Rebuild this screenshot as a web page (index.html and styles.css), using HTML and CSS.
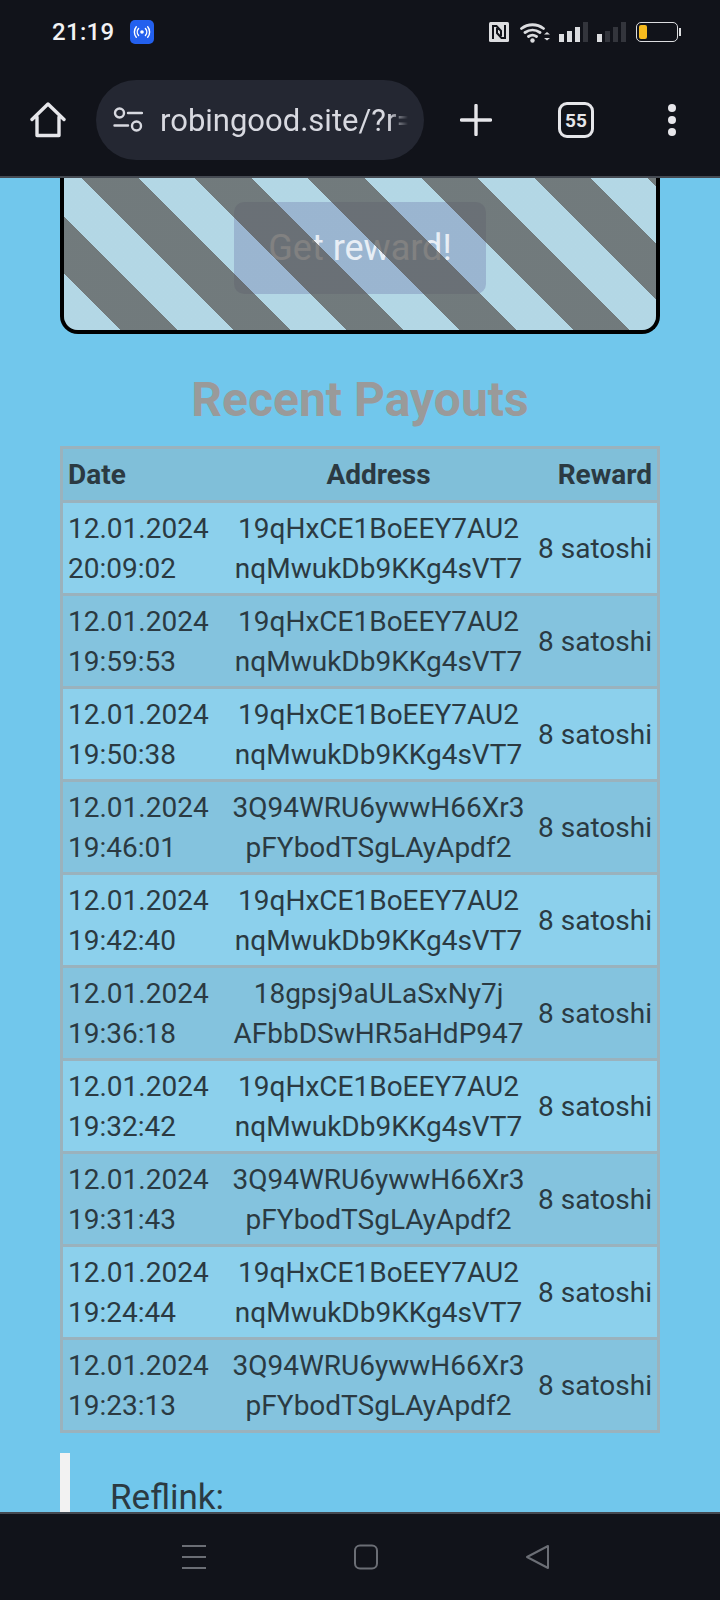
FILE: index.html
```html
<!DOCTYPE html>
<html lang="en">
<head>
  <meta charset="UTF-8" />
  <meta name="viewport" content="width=device-width, initial-scale=1.0"/>
  <title>Recent Payouts</title>
  <link rel="stylesheet" href="styles.css">
</head>
<body>
  <header class="top">
    <div class="status">
      <span class="time">21:19</span>
      <span class="hotspot">
        <svg width="24" height="24" viewBox="0 0 24 24" fill="none" stroke="#fff" stroke-width="1.4" stroke-linecap="round">
          <circle cx="12" cy="12" r="1.8" fill="#fff" stroke="none"/>
          <path d="M8.6 8.6a5 5 0 0 0 0 6.8M15.4 8.6a5 5 0 0 1 0 6.8M6.3 6.8a8 8 0 0 0 0 10.4M17.7 6.8a8 8 0 0 1 0 10.4"/>
        </svg>
      </span>
      <span class="status-right">
        <svg class="nfc" width="20" height="20" viewBox="0 0 20 20">
          <rect width="20" height="20" rx="1.500" fill="#dcdde0"/>
          <path fill="none" stroke="#11131a" stroke-width="2" d="M4 17V4h3.500l4.500 5v5M16 3v13h-3.500L8 11V6"/>
        </svg>
        <svg class="wifi" width="30" height="22" viewBox="0 0 30 22" fill="none" stroke="#dcdde0" stroke-width="2.800" stroke-linecap="round">
          <path d="M1.500 7.500a18 18 0 0 1 22 0M5 11.500a13 13 0 0 1 15 0M8.500 15.500a7 7 0 0 1 8 0"/>
          <circle cx="12.500" cy="19.500" r="2.200" fill="#dcdde0" stroke="none"/>
          <path d="M24 13.500l3-2.500 3 2.500zM24 17l3 2.500 3-2.500z" fill="#dcdde0" stroke="none"/>
        </svg>
        <span class="bars">
          <i class="b1"></i><i class="b2"></i><i class="b3"></i><i class="b4 off"></i>
        </span>
        <span class="bars">
          <i class="b1"></i><i class="b2 off"></i><i class="b3 off"></i><i class="b4 off"></i>
        </span>
        <span class="battery"><span class="level"></span></span>
      </span>
    </div>
    <div class="toolbar">
      <svg class="home" width="36" height="36" viewBox="0 0 36 36" fill="none" stroke="#e6e6ea" stroke-width="3.400" stroke-linejoin="round" stroke-linecap="round">
        <path d="M2 17.500L18 2l16 15.500M7 15v18.500h22V15"/>
      </svg>
      <div class="urlbar">
        <svg class="tune" width="30" height="28" viewBox="0 0 30 28" fill="none" stroke="#d8d9e0" stroke-width="2.400" stroke-linecap="round">
          <circle cx="6.500" cy="7" r="4.500"/>
          <path d="M15 7h14M1.500 19.500H15"/>
          <circle cx="23.500" cy="20" r="4.500"/>
        </svg>
        <span class="url">robingood.site/?r=19qHxCE1</span>
      </div>
      <svg class="plus" width="32" height="32" viewBox="0 0 32 32" stroke="#e6e6ea" stroke-width="3.400" stroke-linecap="round">
        <path d="M16 1.500v29M1.500 16h29"/>
      </svg>
      <span class="tabs">55</span>
      <span class="dots"><i></i><i></i><i></i></span>
    </div>
  </header>

  <main class="page">
    <div class="claim">
      <button class="reward-btn">Get reward!</button>
      <div class="stripes"></div>
    </div>

    <h2 class="payouts-title">Recent Payouts</h2>

    <table class="payouts">
      <thead>
        <tr><th class="c-date">Date</th><th class="c-addr">Address</th><th class="c-reward">Reward</th></tr>
      </thead>
      <tbody>
        <tr><td>12.01.2024<br>20:09:02</td><td class="c-addr">19qHxCE1BoEEY7AU2<br>nqMwukDb9KKg4sVT7</td><td class="c-reward">8 satoshi</td></tr>
        <tr><td>12.01.2024<br>19:59:53</td><td class="c-addr">19qHxCE1BoEEY7AU2<br>nqMwukDb9KKg4sVT7</td><td class="c-reward">8 satoshi</td></tr>
        <tr><td>12.01.2024<br>19:50:38</td><td class="c-addr">19qHxCE1BoEEY7AU2<br>nqMwukDb9KKg4sVT7</td><td class="c-reward">8 satoshi</td></tr>
        <tr><td>12.01.2024<br>19:46:01</td><td class="c-addr">3Q94WRU6ywwH66Xr3<br>pFYbodTSgLAyApdf2</td><td class="c-reward">8 satoshi</td></tr>
        <tr><td>12.01.2024<br>19:42:40</td><td class="c-addr">19qHxCE1BoEEY7AU2<br>nqMwukDb9KKg4sVT7</td><td class="c-reward">8 satoshi</td></tr>
        <tr><td>12.01.2024<br>19:36:18</td><td class="c-addr">18gpsj9aULaSxNy7j<br>AFbbDSwHR5aHdP947</td><td class="c-reward">8 satoshi</td></tr>
        <tr><td>12.01.2024<br>19:32:42</td><td class="c-addr">19qHxCE1BoEEY7AU2<br>nqMwukDb9KKg4sVT7</td><td class="c-reward">8 satoshi</td></tr>
        <tr><td>12.01.2024<br>19:31:43</td><td class="c-addr">3Q94WRU6ywwH66Xr3<br>pFYbodTSgLAyApdf2</td><td class="c-reward">8 satoshi</td></tr>
        <tr><td>12.01.2024<br>19:24:44</td><td class="c-addr">19qHxCE1BoEEY7AU2<br>nqMwukDb9KKg4sVT7</td><td class="c-reward">8 satoshi</td></tr>
        <tr><td>12.01.2024<br>19:23:13</td><td class="c-addr">3Q94WRU6ywwH66Xr3<br>pFYbodTSgLAyApdf2</td><td class="c-reward">8 satoshi</td></tr>
      </tbody>
    </table>

    <blockquote class="reflink">Reflink:</blockquote>
  </main>

  <footer class="navbar">
    <svg width="26" height="26" viewBox="0 0 26 26" stroke="#6b6e75" stroke-width="2">
      <path d="M1 2h24M1 13h24M1 24h24"/>
    </svg>
    <svg width="26" height="26" viewBox="0 0 26 26" fill="none" stroke="#6b6e75" stroke-width="2">
      <rect x="2" y="1.500" width="22" height="23" rx="5"/>
    </svg>
    <svg width="26" height="26" viewBox="0 0 26 26" fill="none" stroke="#6b6e75" stroke-width="2" stroke-linejoin="round">
      <path d="M23 2v22L2 13z"/>
    </svg>
  </footer>
</body>
</html>
```

FILE: styles.css
```css
* { box-sizing: border-box; }
html, body { height: 100%; }
body {
  margin: 0;
  height: 1600px;
  overflow: hidden;
  display: flex; flex-direction: column;
  font-family: Roboto, "Noto Sans", sans-serif;
  background-color: #71c7ec;
  color: #2b3a42;
}

/* phone status bar + browser toolbar */
.top {
  height: 178px; flex: none;
  background-color: #11131a;
  border-bottom: 2px solid #454a52;
}
.status {
  height: 64px;
  display: flex; align-items: center;
  padding: 0 42px 0 52px;
}
.time { font-size: 24px; font-weight: 500; color: #f2f2f4; letter-spacing: 0.3px; }
.hotspot {
  width: 24px; height: 24px; margin-left: 16px;
  background-color: #2360ee; border-radius: 5px;
  display: flex;
}
.status-right { margin-left: auto; display: flex; align-items: center; }
.wifi { margin-left: 11px; }
.bars { display: flex; align-items: flex-end; gap: 3px; height: 20px; margin-left: 9px; }
.bars i { width: 5px; background-color: #dcdde0; }
.bars i.off { background-color: #33353c; }
.bars .b1 { height: 8px; }
.bars .b2 { height: 11px; }
.bars .b3 { height: 15px; }
.bars .b4 { height: 20px; }
.battery {
  position: relative;
  width: 42px; height: 20px; margin-left: 10px; padding: 2px;
  border: 1.500px solid #dcdde0; border-radius: 5px;
}
.battery::after {
  content: "";
  position: absolute; right: -4px; top: 5px;
  width: 2px; height: 8px;
  background-color: #dcdde0;
}
.level { display: block; width: 8px; height: 100%; background-color: #f7bb1e; border-radius: 2px; }

.toolbar {
  height: 112px;
  display: flex; align-items: flex-start;
  padding: 16px 0 0 30px;
}
.home { margin-top: 22px; flex: none; }
.urlbar {
  width: 328px; height: 80px; margin-left: 30px; padding-left: 17px;
  background-color: #242732; border-radius: 40px;
  display: flex; align-items: center;
  flex: none;
}
.tune { flex: none; }
.url {
  width: 248px; margin-left: 17px;
  overflow: hidden; white-space: nowrap;
  font-size: 31px; color: #d8d9e0;
  -webkit-mask-image: linear-gradient(to right, #000 92%, transparent);
  mask-image: linear-gradient(to right, #000 92%, transparent);
}
.plus { margin: 24px 0 0 36px; flex: none; }
.tabs {
  width: 36px; height: 36px; margin: 22px 0 0 66px;
  border: 3.500px solid #e6e6ea; border-radius: 9px;
  display: flex; align-items: center; justify-content: center;
  font-size: 19px; font-weight: 700; color: #e6e6ea;
  flex: none;
}
.dots { display: flex; flex-direction: column; gap: 4px; margin: 24px 0 0 74px; }
.dots i { width: 8px; height: 8px; background-color: #e6e6ea; border-radius: 50%; }

/* scrolled page */
.page {
  flex: 1; min-height: 0;
  overflow: hidden;
  padding: 0 60px;
}
.claim {
  position: relative;
  height: 156px;
  background-color: rgb(149,209,223);
  border: solid #000;
  border-width: 0 4px 4px;
  border-radius: 0 0 18px 18px;
  overflow: hidden;
  display: flex; justify-content: center;
  padding-top: 24px;
}
.reward-btn {
  width: 252px; height: 92px;
  border: none; border-radius: 10px;
  background-color: rgb(99,141,181);
  color: #fff;
  font-family: inherit; font-size: 36px;
}
.stripes {
  position: absolute; inset: 0;
  background: repeating-linear-gradient(45deg,
    rgba(209,221,235,.5) 0 40px,
    rgba(107,107,107,.85) 40px 80px);
}
.payouts-title {
  margin: 40px 0 20px;
  text-align: center;
  font-size: 48px; line-height: 52px; font-weight: 700;
  color: #9a9a9a;
}

.payouts {
  width: 600px;
  border-collapse: collapse;
  table-layout: fixed;
  font-size: 28px; line-height: 40px;
  border: 3px solid #9ab2bd;
}
.payouts th {
  height: 54px; padding: 0 5px;
  text-align: left;
  font-size: 28px; font-weight: 700;
  background-color: #80bfd9;
}
.payouts td { padding: 6px 5px 4px; }
.payouts tr { border-bottom: 3px solid #9ab2bd; }
.payouts tbody tr:nth-child(odd) { background-color: #8cd0ec; }
.payouts tbody tr:nth-child(even) { background-color: #84c3de; }
.payouts th.c-date { width: 165px; }
.payouts th.c-addr { width: 304px; }
.payouts td.c-addr { text-align: center; padding-left: 0; padding-right: 0; white-space: nowrap; }
.payouts th.c-addr { text-align: center; }
.payouts .c-reward { text-align: right; white-space: nowrap; padding-left: 0; }

.reflink {
  margin: 20px 0 0;
  height: 80px;
  padding: 22px 0 0 40px;
  border-left: 10px solid #f2f2f2;
  font-size: 35px; line-height: 46px;
}

.navbar {
  height: 88px; flex: none;
  background-color: #11131a;
  border-top: 2px solid #454a52;
  display: flex; align-items: flex-start; justify-content: center;
  gap: 146px;
  padding: 30px 0 0 12px;
}
```
